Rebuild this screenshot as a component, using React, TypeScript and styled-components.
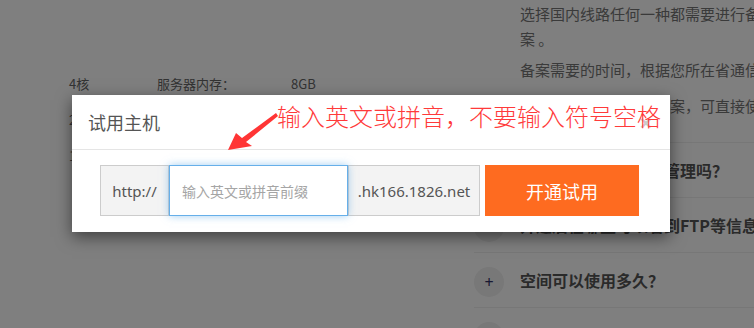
import styled, { createGlobalStyle } from "styled-components";

const GlobalStyle = createGlobalStyle`
  html, body {
    margin: 0;
    padding: 0;
    background: #fff;
  }
  body {
    font-family: "Noto Sans", "Noto Sans CJK SC", sans-serif;
    overflow: hidden;
  }
`;

const Page = styled.div`
  position: relative;
  width: 754px;
  height: 328px;
  overflow: hidden;
  display: flex;
  background: #fff;
`;

const LeftCol = styled.div`
  flex: none;
  width: 474px;
  box-sizing: border-box;
  padding: 66px 0 0 69px;
`;

const SpecRow = styled.div`
  display: flex;
  height: 36px;
  line-height: 36px;
  font-size: 13px;
  color: #666;
  font-family: "Noto Sans CJK SC", sans-serif;
`;

const SpecCell = styled.div<{ $w?: number }>`
  width: ${(p) => (p.$w ? `${p.$w}px` : "auto")};
  flex: none;
`;

const RightCol = styled.div`
  flex: none;
  width: 310px;
`;

const Para = styled.p<{ $lh: number; $w: number }>`
  margin: 1px 0 0;
  padding-left: 46px;
  width: ${(p) => p.$w}px;
  font-size: 15px;
  line-height: ${(p) => p.$lh}px;
  color: #747474;
  font-family: "Noto Sans CJK SC", sans-serif;
`;

const FaqList = styled.div`
  margin-top: 18px;
`;

const FaqItem = styled.div`
  height: 54px;
  border-top: 1px solid #eee;
  display: flex;
  align-items: center;
  gap: 16px;
`;

const PlusCircle = styled.span`
  flex: none;
  width: 30px;
  height: 30px;
  margin-top: 4px;
  border-radius: 50%;
  background: #f0f0f0;
  color: #333366;
  font-size: 16px;
  display: flex;
  align-items: center;
  justify-content: center;
`;

const FaqText = styled.span`
  font-size: 16px;
  font-weight: 700;
  color: #555;
  white-space: nowrap;
  font-family: "Noto Sans CJK SC", sans-serif;
`;

const Overlay = styled.div`
  position: absolute;
  inset: 0;
  background: rgba(0, 0, 0, 0.5);
`;

const Modal = styled.div`
  position: absolute;
  left: 72px;
  top: 95px;
  width: 598px;
  background: #fff;
  box-shadow: 0 5px 15px rgba(0, 0, 0, 0.5);
`;

const Header = styled.div`
  height: 55px;
  box-sizing: border-box;
  border-bottom: 1px solid #e5e5e5;
  padding: 0 18px 0 16px;
  display: flex;
  align-items: center;
  justify-content: space-between;
`;

const Title = styled.h4`
  margin: 0;
  font-size: 18px;
  font-weight: 400;
  color: #555;
  font-family: "Noto Sans CJK SC", sans-serif;
`;

const Close = styled.button`
  border: none;
  background: none;
  padding: 0;
  font-size: 21px;
  font-weight: 700;
  line-height: 1;
  color: #000;
  opacity: 0.2;
  font-family: "Liberation Sans", sans-serif;
`;

const Body = styled.div`
  padding: 15px 31px 16px 28px;
  display: flex;
  gap: 5px;
`;

const InputGroup = styled.div`
  display: flex;
  height: 51px;
`;

const Addon = styled.span<{ $w: number }>`
  width: ${(p) => p.$w}px;
  box-sizing: border-box;
  border: 1px solid #ccc;
  background: #f3f3f3;
  color: #555;
  font-size: 15px;
  display: flex;
  align-items: center;
  justify-content: center;
`;

const Input = styled.input`
  width: 179px;
  box-sizing: border-box;
  border: 1px solid #66afe9;
  box-shadow: 0 0 8px rgba(102, 175, 233, 0.6);
  outline: none;
  padding: 0 12px;
  font-size: 14px;
  color: #555;
  font-family: "Noto Sans CJK SC", sans-serif;
  position: relative;
  z-index: 1;
  &::placeholder {
    color: #a5a5a5;
  }
`;

const Submit = styled.button`
  width: 154px;
  height: 51px;
  border: none;
  background: #fe6b20;
  color: #fff;
  font-size: 18px;
  font-family: "Noto Sans CJK SC", sans-serif;
`;

const Note = styled.div`
  position: absolute;
  left: 205px;
  top: 5px;
  line-height: 32px;
  font-size: 24px;
  color: #ff3a3a;
  white-space: nowrap;
  font-family: "Noto Sans CJK SC", serif;
  font-weight: 300;
`;

const Arrow = styled.svg`
  position: absolute;
  left: 150px;
  top: 10px;
`;

const faqs = [
  "试用主机可以用面板管理吗？",
  "开通后在哪里可以看到FTP等信息？",
  "空间可以使用多久？",
  "如何绑定自己的域名？",
];

export default function App() {
  return (
    <>
      <GlobalStyle />
      <Page>
        <LeftCol>
          <SpecRow>
            <SpecCell $w={88}>4核</SpecCell>
            <SpecCell $w={134}>服务器内存：</SpecCell>
            <SpecCell>8GB</SpecCell>
          </SpecRow>
          <SpecRow>
            <SpecCell $w={88}>20GB</SpecCell>
            <SpecCell $w={134}>带宽：</SpecCell>
            <SpecCell>5M</SpecCell>
          </SpecRow>
          <SpecRow>
            <SpecCell $w={88}>1个</SpecCell>
            <SpecCell $w={134}>数据库：</SpecCell>
            <SpecCell>100MB</SpecCell>
          </SpecRow>
        </LeftCol>
        <RightCol>
          <Para $lh={25} $w={248}>
            选择国内线路任何一种都需要进行备案 。
          </Para>
          <Para $lh={36} $w={262}>
            备案需要的时间，根据您所在省通信管理局审核而定，若已备案，可直接使用
          </Para>
          <FaqList>
            {faqs.map((q) => (
              <FaqItem key={q}>
                <PlusCircle>+</PlusCircle>
                <FaqText>{q}</FaqText>
              </FaqItem>
            ))}
          </FaqList>
        </RightCol>
        <Overlay />
        <Modal>
          <Header>
            <Title>试用主机</Title>
            <Close>×</Close>
          </Header>
          <Body>
            <InputGroup>
              <Addon $w={69}>http://</Addon>
              <Input placeholder="输入英文或拼音前缀" autoFocus />
              <Addon $w={132}>.hk166.1826.net</Addon>
            </InputGroup>
            <Submit>开通试用</Submit>
          </Body>
          <Note>输入英文或拼音，不要输入符号空格</Note>
          <Arrow width="60" height="50" viewBox="222 105 60 50">
            <polygon
              points="228,150 236,133 242,138 276,113 278,116 246,142 252,146"
              fill="#ff3535"
            />
          </Arrow>
        </Modal>
      </Page>
    </>
  );
}
